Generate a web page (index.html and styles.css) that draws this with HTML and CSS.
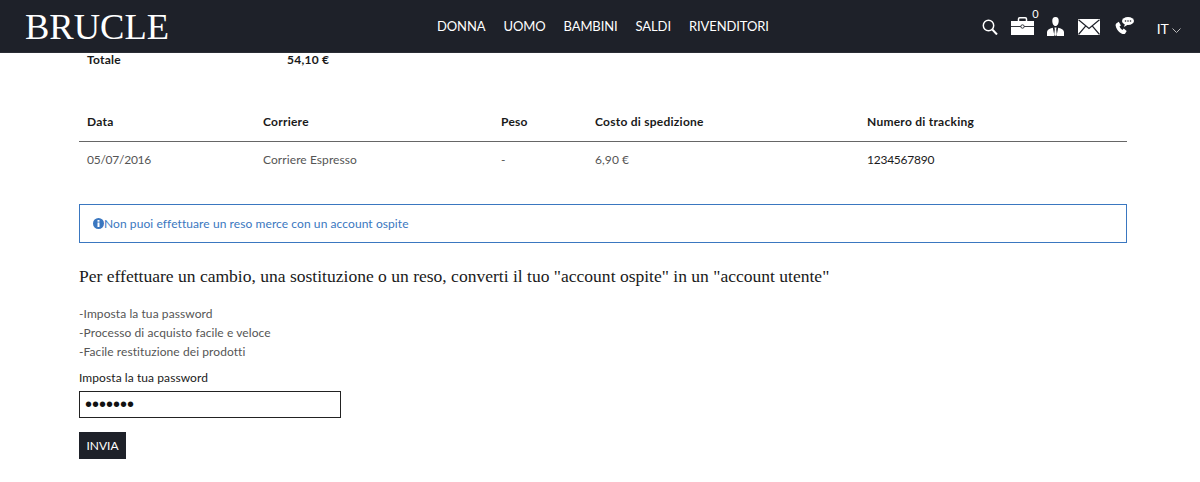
FILE: index.html
```html
<!DOCTYPE html>
<html lang="it">
<head>
    <meta charset="UTF-8">
    <meta name="viewport" content="width=device-width, initial-scale=1.0">
    <title>Bruce - Ordine</title>
    <link rel="stylesheet" href="styles.css">
</head>
<body>
    <header class="topbar">
        <div class="logo">BRUCLE</div>
        <nav class="menu">
            <a href="#">DONNA</a>
            <a href="#">UOMO</a>
            <a href="#">BAMBINI</a>
            <a href="#">SALDI</a>
            <a href="#">RIVENDITORI</a>
        </nav>
        <div class="tools">
            <svg class="icon-search" width="16" height="16" viewBox="0 0 16 16"><circle cx="6.500" cy="6.500" r="5.200" fill="none" stroke="#fff" stroke-width="1.500"/><path d="M10.300 10.500 15 15.500" stroke="#fff" stroke-width="2" fill="none"/></svg>
            <span class="cart">
                <svg width="23" height="18" viewBox="0 0 23 18"><path d="M7.500 4V2c0-.8.500-1.200 1.200-1.200h5.600c.7 0 1.200.4 1.200 1.200v2" fill="none" stroke="#fff" stroke-width="1.500"/><rect y="4" width="23" height="14" fill="#fff"/><path d="M0 9.500h23" stroke="#1e2129" stroke-width=".9"/><circle cx="11.500" cy="9.500" r="1.700" fill="#fff" stroke="#1e2129" stroke-width=".9"/></svg>
                <span class="cart-count">0</span>
            </span>
            <svg class="icon-person" width="17" height="19" viewBox="0 0 17 19"><path d="M8.500 0C6 0 5 1.800 5.300 4.500 5.500 6.500 6.300 9 8.500 9s3-2.500 3.200-4.500C12 1.800 11 0 8.500 0z" fill="#fff"/><path d="M0 19v-4c0-2 2-3.300 5.800-4.300L7.500 19zM17 19v-4c0-2-2-3.300-5.800-4.300L9.500 19z" fill="#fff"/><path d="M7.500 10.500h2L9.200 12.500l.6 5-1.300 1.500-1.300-1.500.6-5z" fill="#fff"/></svg>
            <svg class="icon-mail" width="22" height="16" viewBox="0 0 22 16"><rect width="22" height="16" fill="#fff"/><path d="M.5.800 11 9.500 21.500.800M.5 15.500 7.800 6.800M21.500 15.500 14.200 6.800" fill="none" stroke="#1e2129" stroke-width="1.200"/></svg>
            <svg class="icon-phone" width="19" height="18" viewBox="0 0 19 18"><path d="M1.200 6.500 3.800 4.800l2.100 3.600-1.400 1.200c.7 1.500 1.600 2.500 3 3.300l1.200-1.300 3 2.500-1.500 2.500c-.8.800-2.300.6-3.800-.2C3.200 14.800 1 11.500.6 8.500c-.1-.8.100-1.500.6-2z" fill="#fff"/><ellipse cx="13" cy="4" rx="6" ry="4" fill="#fff"/><path d="M10 6.500 9 10l4-2.500z" fill="#fff"/><circle cx="10.500" cy="4" r=".8" fill="#1e2129"/><circle cx="13" cy="4" r=".8" fill="#1e2129"/><circle cx="15.500" cy="4" r=".8" fill="#1e2129"/></svg>
            <span class="lang">IT <svg width="9" height="5" viewBox="0 0 9 5"><path d="M.5.500 4.500 4.500 8.500.500" fill="none" stroke="#bbb" stroke-width="1"/></svg></span>
        </div>
    </header>

    <main class="content">
        <div class="total-row">
            <span class="total-label">Totale</span>
            <span>54,10 €</span>
        </div>

        <table class="shipping">
            <thead>
                <tr>
                    <th class="col-date">Data</th>
                    <th class="col-courier">Corriere</th>
                    <th class="col-weight">Peso</th>
                    <th class="col-cost">Costo di spedizione</th>
                    <th>Numero di tracking</th>
                </tr>
            </thead>
            <tbody>
                <tr>
                    <td class="digits">05/07/2016</td>
                    <td>Corriere Espresso</td>
                    <td>-</td>
                    <td>6,90 €</td>
                    <td class="digits tracking">1234567890</td>
                </tr>
            </tbody>
        </table>

        <div class="notice">
            <svg width="11" height="11" viewBox="0 0 11 11"><circle cx="5.500" cy="5.500" r="5.500" fill="#3a77c0"/><rect x="4.500" y="4.500" width="2" height="4.500" fill="#fff"/><rect x="4.500" y="2" width="2" height="1.700" fill="#fff"/></svg><span>Non puoi effettuare un reso merce con un account ospite</span>
        </div>

        <h2 class="convert-title">Per effettuare un cambio, una sostituzione o un reso, converti il tuo "account ospite" in un "account utente"</h2>

        <ul class="benefits">
            <li>-Imposta la tua password</li>
            <li>-Processo di acquisto facile e veloce</li>
            <li>-Facile restituzione dei prodotti</li>
        </ul>

        <form class="password-form">
            <label for="password">Imposta la tua password</label>
            <input type="password" id="password" value="1234567">
            <button type="button">INVIA</button>
        </form>
    </main>
</body>
</html>
```

FILE: styles.css
```css
* {
    box-sizing: border-box;
}
body {
    margin: 0;
    font-family: "Lato", "Open Sans", sans-serif;
    font-size: 12px;
    letter-spacing: 0.08px;
    color: #555;
    background: #fff;
}
.topbar {
    height: 53px;
    background: #1e2129;
    border-bottom: 1px solid #2a2d35;
    display: flex;
    align-items: center;
    padding: 0 19px 0 25px;
    letter-spacing: 0;
}
.logo {
    font-family: "Liberation Serif", serif;
    font-size: 36.5px;
    color: #fff;
    width: 412px;
}
.menu {
    display: flex;
    gap: 18px;
}
.menu a {
    color: #fff;
    font-size: 13px;
    letter-spacing: -0.1px;
    text-decoration: none;
}
.tools {
    margin-left: auto;
    display: flex;
    align-items: center;
    gap: 13px;
}
.icon-search {
    margin-top: 2px;
}
.cart {
    position: relative;
    display: flex;
}
.cart-count {
    position: absolute;
    top: -10px;
    right: -5px;
    color: #fff;
    font-size: 11px;
}
.icon-mail {
    margin-left: 1px;
    margin-top: 2px;
}
.icon-phone {
    margin-left: 2px;
}
.lang {
    color: #fff;
    font-size: 14px;
    margin-left: 10px;
    margin-top: 5px;
}
.lang svg {
    vertical-align: middle;
}
.content {
    padding: 0 73px 0 79px;
}
.total-row {
    display: flex;
    padding: 0 8px;
    height: 14px;
    font-weight: 700;
    letter-spacing: 0.25px;
    color: #1a1a1a;
    line-height: 14px;
}
.total-label {
    width: 200px;
}
.shipping {
    width: 100%;
    border-collapse: collapse;
    margin-top: 37px;
}
.shipping th {
    text-align: left;
    font-weight: 700;
    letter-spacing: 0.25px;
    color: #1a1a1a;
    padding: 0 8px 2px;
    height: 37px;
    border-bottom: 1px solid #666;
    vertical-align: middle;
}
.shipping td {
    padding: 0 8px;
    height: 37px;
}
.shipping .digits {
    letter-spacing: -0.25px;
}
.col-date {
    width: 176px;
}
.col-courier {
    width: 238px;
}
.col-weight {
    width: 94px;
}
.col-cost {
    width: 272px;
}
.tracking {
    color: #1a1a1a;
}
.notice {
    margin-top: 26px;
    height: 39px;
    border: 1px solid #3a77c0;
    color: #3a77c0;
    display: flex;
    align-items: center;
    padding-left: 13px;
}
.convert-title {
    font-family: "Liberation Serif", serif;
    font-weight: 400;
    font-size: 17.55px;
    letter-spacing: 0;
    color: #1a1a1a;
    margin: 23px 0 0;
    line-height: 20px;
}
.benefits {
    list-style: none;
    margin: 18px 0 0;
    padding: 0;
}
.benefits li {
    height: 19px;
    line-height: 19px;
}
.password-form label {
    display: block;
    color: #1a1a1a;
    margin-top: 8px;
    line-height: 18px;
}
.password-form input {
    display: block;
    width: 262px;
    height: 27px;
    margin-top: 4px;
    border: 1px solid #222;
    padding: 0 5px;
    font-size: 20px;
    color: #111;
}
.password-form button {
    display: block;
    margin-top: 14px;
    width: 47px;
    height: 27px;
    background: #1e2129;
    border: 0;
    color: #fff;
    font-family: inherit;
    font-size: 12px;
    padding: 0;
}
```
